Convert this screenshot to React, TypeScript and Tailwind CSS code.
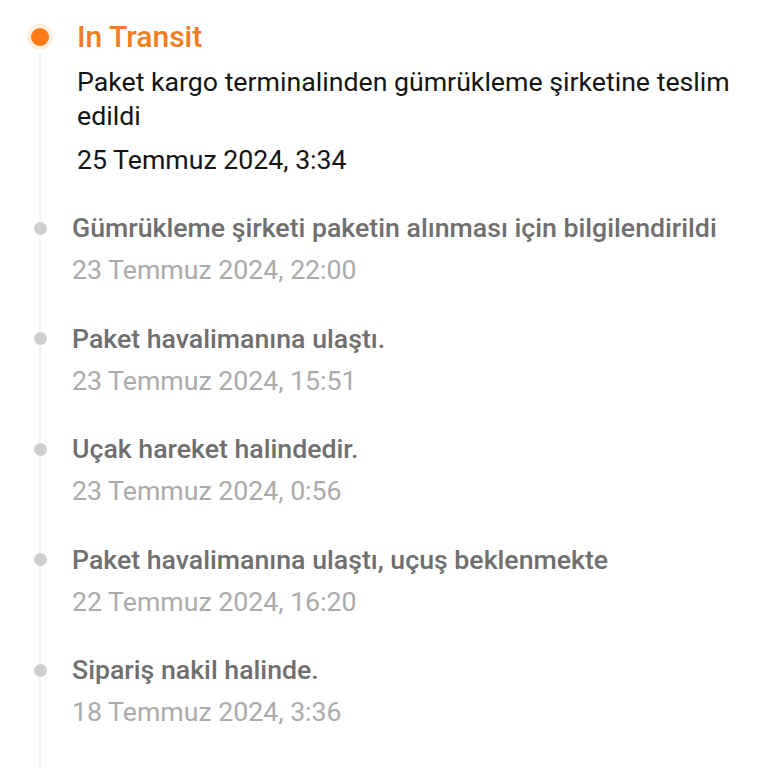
const events = [
  { title: "Gümrükleme şirketi paketin alınması için bilgilendirildi", date: "23 Temmuz 2024, 22:00" },
  { title: "Paket havalimanına ulaştı.", date: "23 Temmuz 2024, 15:51" },
  { title: "Uçak hareket halindedir.", date: "23 Temmuz 2024, 0:56" },
  { title: "Paket havalimanına ulaştı, uçuş beklenmekte", date: "22 Temmuz 2024, 16:20" },
  { title: "Sipariş nakil halinde.", date: "18 Temmuz 2024, 3:36" },
];

const App = () => {
  return (
    <div
      className="w-[768px] h-[768px] overflow-hidden bg-white pt-4 pl-[27px] flex flex-col"
      style={{ fontFamily: "Roboto, 'Noto Sans', sans-serif" }}
    >
      {/* current status */}
      <div className="flex">
        <div className="w-[26px] flex flex-col items-center shrink-0">
          <div className="mt-[8px] w-[26px] h-[26px] rounded-full bg-[#fdeedf] flex items-center justify-center">
            <div className="w-[18px] h-[18px] rounded-full bg-[#fd7a17]" />
          </div>
          <div className="mt-[3px] w-[2px] flex-1 bg-[#f3f3f3]" />
        </div>
        <div className="ml-[24px] pb-[30px] pr-[30px]">
          <div className="text-[30px] leading-[42px] font-medium text-[#f27d1c]">In Transit</div>
          <div className="mt-[7px] text-[26.7px] leading-[34px] text-[#151515]">
            Paket kargo terminalinden gümrükleme şirketine teslim edildi
          </div>
          <div className="mt-[10px] text-[26.7px] leading-[34px] text-[#151515]">25 Temmuz 2024, 3:34</div>
        </div>
      </div>

      {events.map((e) => (
        <div key={e.date} className="flex">
          <div className="w-[26px] flex flex-col items-center shrink-0">
            <div className="w-[2px] h-[14.5px] bg-[#f3f3f3]" />
            <div className="w-[13px] h-[13px] rounded-full bg-[#cecece]" />
            <div className="w-[2px] flex-1 bg-[#f3f3f3]" />
          </div>
          <div className="ml-[19px] pb-[26.5px]">
            <div className="text-[26.7px] leading-[42px] font-medium text-[#6f6f6f]">{e.title}</div>
            <div className="text-[26.7px] leading-[42px] text-[#ababab]">{e.date}</div>
          </div>
        </div>
      ))}

      <div className="flex flex-1">
        <div className="w-[26px] flex flex-col items-center shrink-0">
          <div className="w-[2px] flex-1 bg-[#f3f3f3]" />
        </div>
      </div>
    </div>
  );
};

export default App;
